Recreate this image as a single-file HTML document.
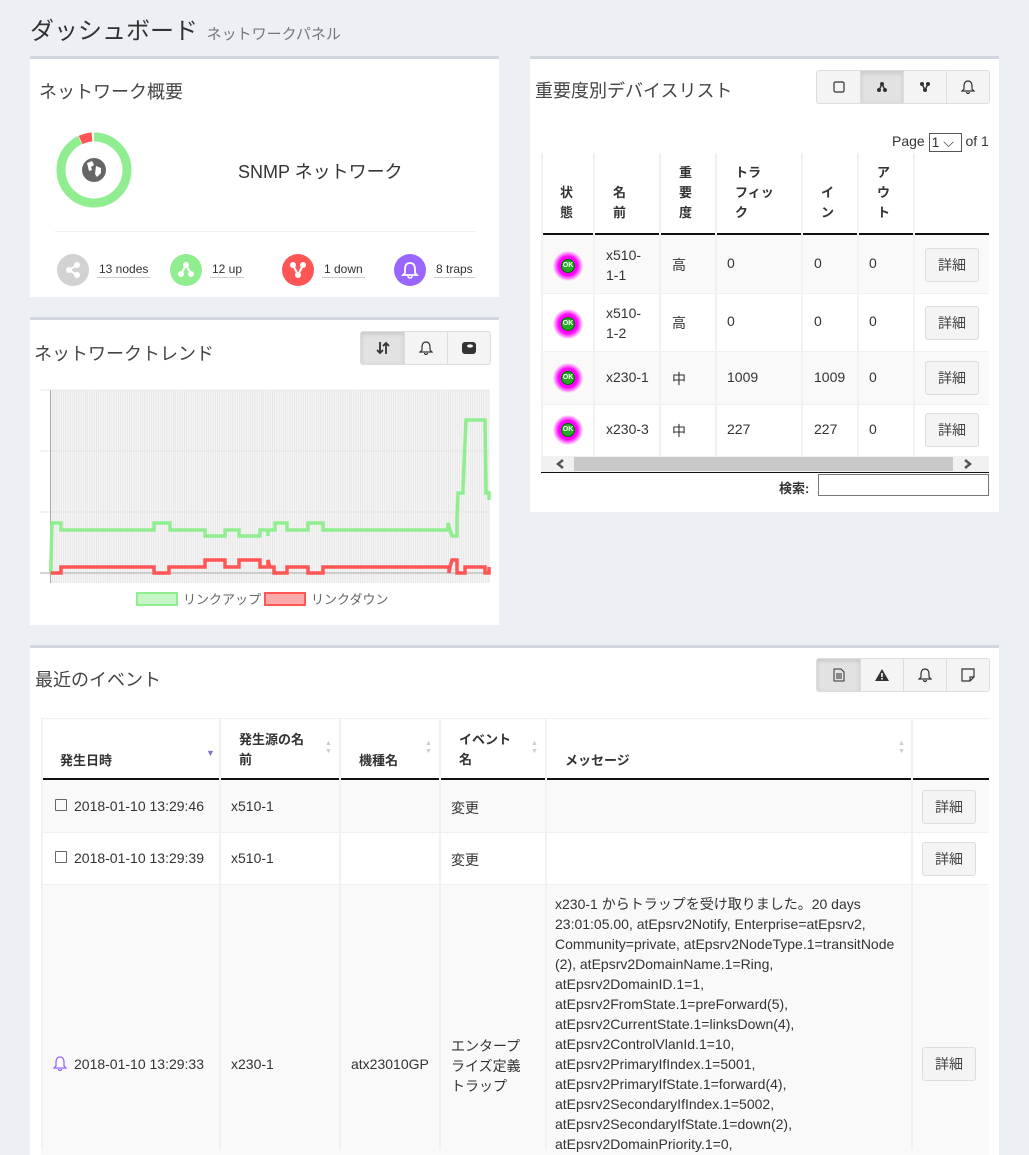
<!DOCTYPE html>
<html><head><meta charset="utf-8"><style>
*{box-sizing:border-box;margin:0;padding:0}
body{width:1029px;height:1150px;overflow:hidden;background:#ecf0f5;font-family:"Liberation Sans","Noto Sans CJK JP",sans-serif;color:#333;font-size:14px;position:relative}
.a{position:absolute}
.panel{position:absolute;background:#fff;border-top:3px solid #d2d6de}
.ttl{position:absolute;font-size:18px;color:#444;white-space:nowrap}
.bg{position:absolute;display:flex;border:1px solid #ddd;border-radius:3px;height:34px;overflow:hidden}
.bg div{width:43px;border-left:1px solid #ddd;background:#f4f4f4;display:flex;align-items:center;justify-content:center}
.bg div:first-child{border-left:none}
.bg div.on{background:#e2e2e2;box-shadow:inset 0 2px 4px rgba(0,0,0,.12)}
.btn{position:absolute;width:54px;height:34px;border:1px solid #ddd;border-radius:3px;background:#f4f4f4;display:flex;align-items:center;justify-content:center;font-size:14px;color:#444}
.c{position:absolute;border-right:2px solid #f1f1f1}
.ok{position:absolute;width:30px;height:30px;border-radius:50%;background:radial-gradient(circle,#f0f 0,#f0f 45%,rgba(255,0,255,0) 72%)}
.ok i{position:absolute;left:8px;top:8px;width:14px;height:14px;border-radius:50%;background:#2a2;border:1px solid #060;font-style:normal;font-size:7px;color:#fff;line-height:12px;text-align:center;font-weight:bold}
.hd{font-weight:bold;font-size:13px;color:#333}
.stat{position:absolute;display:flex;align-items:center}
.stat .ic{width:32px;height:32px;border-radius:50%;display:flex;align-items:center;justify-content:center}
.stat span{margin-left:8px;border-bottom:1px solid #ccc;font-size:12px;padding:0 2px 1px}
</style></head><body>
<div class="a" style="left:30px;top:11px;font-size:24px;color:#333">ダッシュボード <span style="font-size:15px;color:#777;margin-left:2px">ネットワークパネル</span></div>

<!-- Panel 1 -->
<div class="panel" style="left:30px;top:56px;width:469px;height:241px">
<div class="ttl" style="left:9px;top:19px">ネットワーク概要</div>
<svg class="a" style="left:26px;top:73px" width="76" height="76" viewBox="0 0 76 76">
<circle cx="38" cy="38" r="33" fill="none" stroke="#90ee90" stroke-width="9"/>
<path d="M38 5 A33 33 0 0 0 24 8.2" fill="none" stroke="#fff" stroke-width="10"/>
<path d="M36 5 A33 33 0 0 0 24.5 8" fill="none" stroke="#f55" stroke-width="9"/>
<circle cx="38" cy="38" r="12" fill="#666"/>
<path d="M31 31 l5 -2 2 4 -3 2 1 3 -3 1z M40 34 l5 2 0 5 -4 4 -2 -3z" fill="#fff"/>
</svg>
<div class="a" style="left:208px;top:99px;font-size:18px;color:#333">SNMP ネットワーク</div>
<div class="a" style="left:25px;top:172px;width:420px;border-top:1px solid #eee"></div>
<div class="stat" style="left:27px;top:195px"><div class="ic" style="background:#d2d2d2"><svg width="18" height="18"><circle cx="5" cy="9" r="3" fill="#fff"/><circle cx="13" cy="4" r="3" fill="#fff"/><circle cx="13" cy="14" r="3" fill="#fff"/><path d="M5 9L13 4M5 9L13 14" stroke="#fff" stroke-width="2"/></svg></div><span>13 nodes</span></div>
<div class="stat" style="left:140px;top:195px"><div class="ic" style="background:#90ee90"><svg width="18" height="18"><circle cx="9" cy="4" r="3" fill="#fff"/><circle cx="4" cy="13" r="3" fill="#fff"/><circle cx="14" cy="13" r="3" fill="#fff"/><path d="M9 4L4 13M9 4L14 13" stroke="#fff" stroke-width="2"/></svg></div><span>12 up</span></div>
<div class="stat" style="left:252px;top:195px"><div class="ic" style="background:#f55"><svg width="18" height="18"><circle cx="4" cy="4" r="3" fill="#fff"/><circle cx="14" cy="4" r="3" fill="#fff"/><circle cx="9" cy="14" r="3" fill="#fff"/><path d="M4 4L9 14M14 4L9 14" stroke="#fff" stroke-width="2"/></svg></div><span>1 down</span></div>
<div class="stat" style="left:364px;top:195px"><div class="ic" style="background:#9966ff"><svg width="18" height="18"><path d="M9 2c-4 0-5 3-5 6v4l-2 2h14l-2-2V8c0-3-1-6-5-6z" fill="none" stroke="#fff" stroke-width="1.8"/><path d="M7 15a2 2 0 0 0 4 0" stroke="#fff" fill="none" stroke-width="1.6"/></svg></div><span>8 traps</span></div>
</div>

<!-- Panel 2 -->
<div class="panel" style="left:30px;top:317px;width:469px;height:308px">
<div class="ttl" style="left:4px;top:20px">ネットワークトレンド</div>
<div class="bg" style="left:330px;top:11px"><div class="on"><svg width="14" height="14"><path d="M4 1v11M1 9l3 3 3-3M10 13V2M7 5l3-3 3 3" stroke="#333" stroke-width="1.8" fill="none"/></svg></div><div><svg width="14" height="14"><path d="M7 1c-3 0-4 2.5-4 5v3l-2 2h12l-2-2V6c0-2.5-1-5-4-5z M5.5 12a1.5 1.5 0 0 0 3 0" fill="none" stroke="#333" stroke-width="1.2"/></svg></div><div><svg width="16" height="16"><rect x="1" y="2" width="14" height="12" rx="3" fill="#333"/><ellipse cx="9" cy="6" rx="3" ry="1.6" fill="#fff"/></svg></div></div>
</div>
<svg class="a" style="left:30px;top:320px" width="469" height="300">
<defs><pattern id="p" width="2.2" height="10" patternUnits="userSpaceOnUse"><rect width="2.2" height="10" fill="#f6f6f6"/><rect width="1" height="10" fill="#e6e6e6"/></pattern></defs>
<rect x="21" y="70" width="439" height="193" fill="url(#p)"/>
<line x1="10" y1="70" x2="460" y2="70" stroke="#e8e8e8"/>
<line x1="10" y1="131" x2="460" y2="131" stroke="#e4e4e4"/>
<line x1="10" y1="192" x2="460" y2="192" stroke="#e4e4e4"/>
<line x1="10" y1="253" x2="460" y2="253" stroke="#aaa"/>
<line x1="20.5" y1="70" x2="20.5" y2="263" stroke="#aaa"/>
<polyline fill="none" stroke="#90ee90" stroke-width="3.5" points="20.7,253 22,203 31,203 31,210 124,210 124,203 140,203 140,210 175,210 175,216 195,216 195,210 209,210 209,216 230,216 230,210 238,210 238,216 238,210 245,210 245,203 257,203 257,210 278,210 278,203 293,203 293,210 418,210 418,203 420,210 422,216 427,216 427,198 428,173 433,173 433,168 436,100 455,100 456,173 459,173 459,180"/>
<polyline fill="none" stroke="#f55" stroke-width="3.5" points="20.7,253 31,253 31,247 124,247 124,253 139,253 139,247 175,247 175,240 195,240 195,247 209,247 209,240 230,240 230,247 238,247 238,240 240,247 244,247 244,253 257,253 257,247 278,247 278,253 293,253 293,247 419,247 419,253 420,247 422,240 427,240 427,253 435,253 435,247 455,247 455,253 459,253 459,247"/>
<rect x="107" y="273" width="40" height="12" fill="#c6f6c6" stroke="#90ee90" stroke-width="2"/>
<text x="153" y="284" font-size="13" fill="#666" font-family="Liberation Sans,Noto Sans CJK JP,sans-serif">リンクアップ</text>
<rect x="235" y="273" width="40" height="12" fill="#faa" stroke="#f55" stroke-width="2"/>
<text x="281" y="284" font-size="13" fill="#666" font-family="Liberation Sans,Noto Sans CJK JP,sans-serif">リンクダウン</text>
</svg>

<!-- Right panel -->
<div class="panel" style="left:530px;top:56px;width:469px;height:456px">
<div class="ttl" style="left:5px;top:18px">重要度別デバイスリスト</div>
<div class="bg" style="left:286px;top:11px"><div><svg width="12" height="12"><rect x="1" y="1" width="10" height="10" rx="1.5" fill="none" stroke="#333" stroke-width="1.2"/></svg></div><div class="on"><svg width="12" height="12"><circle cx="6" cy="3" r="2" fill="#333"/><circle cx="3" cy="9" r="2" fill="#333"/><circle cx="9" cy="9" r="2" fill="#333"/><path d="M6 3L3 9M6 3L9 9" stroke="#333" stroke-width="1.5"/></svg></div><div><svg width="12" height="12"><circle cx="3" cy="3" r="2" fill="#333"/><circle cx="9" cy="3" r="2" fill="#333"/><circle cx="6" cy="9" r="2" fill="#333"/><path d="M3 3L6 9M9 3L6 9" stroke="#333" stroke-width="1.5"/></svg></div><div><svg width="14" height="14"><path d="M7 1c-3 0-4 2.5-4 5v3l-2 2h12l-2-2V6c0-2.5-1-5-4-5z M5.5 12a1.5 1.5 0 0 0 3 0" fill="none" stroke="#333" stroke-width="1.2"/></svg></div></div>
<div class="a" style="left:362px;top:74px;font-size:14px">Page <span style="display:inline-block;border:1px solid #555;width:33px;height:19px;vertical-align:middle;font-size:14px;line-height:17px;padding-left:2px">1 ⌵</span> of 1</div>
</div>
<!-- right table -->
<div class="a" style="left:541px;top:153px;width:448px;height:303px;background:#fff">
<div class="a" style="left:0;top:82px;width:448px;height:59px;background:#f9f9f9"></div>
<div class="a" style="left:0;top:199px;width:448px;height:52px;background:#f9f9f9"></div>
<div class="a" style="left:0;top:80px;width:448px;border-top:2px solid #111"></div>
<div class="a" style="left:0;top:140px;width:448px;border-top:1px solid #f0f0f0"></div>
<div class="a" style="left:0;top:198px;width:448px;border-top:1px solid #f0f0f0"></div>
<div class="a" style="left:0;top:251px;width:448px;border-top:1px solid #f0f0f0"></div>
<div class="a" style="left:0;top:0;width:2px;height:303px;background:#f1f1f1"></div>
<div class="c" style="left:52px;top:0;height:303px"></div>
<div class="c" style="left:118px;top:0;height:303px"></div>
<div class="c" style="left:174px;top:0;height:303px"></div>
<div class="c" style="left:260px;top:0;height:303px"></div>
<div class="c" style="left:316px;top:0;height:303px"></div>
<div class="c" style="left:372px;top:0;height:303px"></div>
<div class="a hd" style="left:19px;top:30px;line-height:20px">状<br>態</div>
<div class="a hd" style="left:72px;top:30px;line-height:20px">名<br>前</div>
<div class="a hd" style="left:138px;top:10px;line-height:20px">重<br>要<br>度</div>
<div class="a hd" style="left:194px;top:10px;line-height:20px">トラ<br>フィッ<br>ク</div>
<div class="a hd" style="left:280px;top:30px;line-height:20px">イ<br>ン</div>
<div class="a hd" style="left:336px;top:10px;line-height:20px">ア<br>ウ<br>ト</div>

<div class="ok" style="left:12px;top:98px"><i>OK</i></div>
<div class="a" style="left:65px;top:92px;line-height:20px">x510-<br>1-1</div><div class="a" style="left:131px;top:102px">高</div><div class="a" style="left:186px;top:102px">0</div><div class="a" style="left:273px;top:102px">0</div><div class="a" style="left:328px;top:102px">0</div>
<div class="btn" style="left:384px;top:95px">詳細</div>
<div class="ok" style="left:12px;top:156px"><i>OK</i></div>
<div class="a" style="left:65px;top:150px;line-height:20px">x510-<br>1-2</div><div class="a" style="left:131px;top:160px">高</div><div class="a" style="left:186px;top:160px">0</div><div class="a" style="left:273px;top:160px">0</div><div class="a" style="left:328px;top:160px">0</div>
<div class="btn" style="left:384px;top:153px">詳細</div>
<div class="ok" style="left:12px;top:210px"><i>OK</i></div>
<div class="a" style="left:65px;top:216px">x230-1</div><div class="a" style="left:131px;top:216px">中</div><div class="a" style="left:186px;top:216px">1009</div><div class="a" style="left:273px;top:216px">1009</div><div class="a" style="left:328px;top:216px">0</div>
<div class="btn" style="left:384px;top:208px">詳細</div>
<div class="ok" style="left:12px;top:262px"><i>OK</i></div>
<div class="a" style="left:65px;top:268px">x230-3</div><div class="a" style="left:131px;top:268px">中</div><div class="a" style="left:186px;top:268px">227</div><div class="a" style="left:273px;top:268px">227</div><div class="a" style="left:328px;top:268px">0</div>
<div class="btn" style="left:384px;top:260px">詳細</div>
</div>
<div class="a" style="left:541px;top:456px;width:448px;height:16px;background:#f1f1f1"></div>
<div class="a" style="left:574px;top:457px;width:379px;height:14px;background:#c9c9c9"></div>
<svg class="a" style="left:555px;top:458px" width="12" height="12"><path d="M8 2L3 6l5 4" fill="none" stroke="#555" stroke-width="2.5"/></svg>
<svg class="a" style="left:961px;top:458px" width="12" height="12"><path d="M4 2l5 4-5 4" fill="none" stroke="#555" stroke-width="2.5"/></svg>
<div class="a" style="left:541px;top:472px;width:448px;border-top:1px solid #111"></div>
<div class="a" style="left:779px;top:478px;font-weight:bold;font-size:13px">検索:</div>
<div class="a" style="left:818px;top:474px;width:171px;height:22px;border:1px solid #777;background:#fff"></div>

<!-- Events -->
<div class="panel" style="left:30px;top:645px;width:969px;height:510px">
<div class="ttl" style="left:5px;top:18px">最近のイベント</div>
<div class="bg" style="left:786px;top:10px"><div class="on"><svg width="12" height="14"><path d="M1 1h7l3 3v9H1z M3 6h6M3 8h6M3 10h6" fill="none" stroke="#333" stroke-width="1"/></svg></div><div><svg width="16" height="14"><path d="M8 1L15 13H1z" fill="#333"/><rect x="7.2" y="5" width="1.6" height="4" fill="#fff"/><rect x="7.2" y="10" width="1.6" height="1.5" fill="#fff"/></svg></div><div><svg width="14" height="14"><path d="M7 1c-3 0-4 2.5-4 5v3l-2 2h12l-2-2V6c0-2.5-1-5-4-5z M5.5 12a1.5 1.5 0 0 0 3 0" fill="none" stroke="#333" stroke-width="1.2"/></svg></div><div><svg width="14" height="14"><path d="M1 1h12v8l-4 4H1z M9 13v-4h4" fill="none" stroke="#333" stroke-width="1.2"/></svg></div></div>
</div>
<div class="a" style="left:41px;top:718px;width:948px;height:432px;background:#fff">
<div class="a" style="left:0;top:62px;width:948px;height:52px;background:#f9f9f9"></div>
<div class="a" style="left:0;top:167px;width:948px;height:270px;background:#f9f9f9"></div>
<div class="a" style="left:0;top:0;width:948px;border-top:1px solid #f0f0f0"></div>
<div class="a" style="left:0;top:60px;width:948px;border-top:2px solid #111"></div>
<div class="a" style="left:0;top:114px;width:948px;border-top:1px solid #f0f0f0"></div>
<div class="a" style="left:0;top:166px;width:948px;border-top:1px solid #f0f0f0"></div>
<div class="c" style="left:0;top:0;height:432px;width:1px"></div>
<div class="c" style="left:178px;top:0;height:432px"></div>
<div class="c" style="left:298px;top:0;height:432px"></div>
<div class="c" style="left:398px;top:0;height:432px"></div>
<div class="c" style="left:504px;top:0;height:432px"></div>
<div class="c" style="left:870px;top:0;height:432px"></div>
<div class="a hd" style="left:19px;top:32px">発生日時</div>
<div class="a" style="left:165px;top:30px;color:#77c;font-size:9px">▼</div>
<div class="a hd" style="left:198px;top:12px;line-height:20px;width:80px">発生源の名<br>前</div>
<div class="a" style="left:284px;top:22px;color:#ccc;font-size:7px;line-height:8px">▲<br>▼</div>
<div class="a hd" style="left:318px;top:32px">機種名</div>
<div class="a" style="left:384px;top:22px;color:#ccc;font-size:7px;line-height:8px">▲<br>▼</div>
<div class="a hd" style="left:418px;top:12px;line-height:20px">イベント<br>名</div>
<div class="a" style="left:490px;top:22px;color:#ccc;font-size:7px;line-height:8px">▲<br>▼</div>
<div class="a hd" style="left:524px;top:32px">メッセージ</div>
<div class="a" style="left:857px;top:22px;color:#ccc;font-size:7px;line-height:8px">▲<br>▼</div>

<div class="a" style="left:14px;top:81px;width:12px;height:12px;border:1px solid #666;border-radius:1px"></div>
<div class="a" style="left:33px;top:80px">2018-01-10 13:29:46</div><div class="a" style="left:190px;top:80px">x510-1</div><div class="a" style="left:410px;top:80px">変更</div>
<div class="btn" style="left:881px;top:72px">詳細</div>
<div class="a" style="left:14px;top:133px;width:12px;height:12px;border:1px solid #666;border-radius:1px"></div>
<div class="a" style="left:33px;top:132px">2018-01-10 13:29:39</div><div class="a" style="left:190px;top:132px">x510-1</div><div class="a" style="left:410px;top:132px">変更</div>
<div class="btn" style="left:881px;top:124px">詳細</div>

<svg class="a" style="left:12px;top:338px" width="14" height="16"><path d="M7 1c-3 0-4 2.5-4 5v4l-2 2h12l-2-2V6c0-2.5-1-5-4-5z M5.5 13a1.5 1.5 0 0 0 3 0" fill="none" stroke="#96f" stroke-width="1.3"/></svg>
<div class="a" style="left:33px;top:338px">2018-01-10 13:29:33</div><div class="a" style="left:190px;top:338px">x230-1</div><div class="a" style="left:310px;top:338px">atx23010GP</div>
<div class="a" style="left:410px;top:318px;line-height:20px;width:80px">エンタープ<br>ライズ定義<br>トラップ</div>
<div class="a" style="left:514px;top:176px;line-height:20px;width:350px;font-size:14px">x230-1 からトラップを受け取りました。20 days<br>23:01:05.00, atEpsrv2Notify, Enterprise=atEpsrv2,<br>Community=private, atEpsrv2NodeType.1=transitNode<br>(2), atEpsrv2DomainName.1=Ring,<br>atEpsrv2DomainID.1=1,<br>atEpsrv2FromState.1=preForward(5),<br>atEpsrv2CurrentState.1=linksDown(4),<br>atEpsrv2ControlVlanId.1=10,<br>atEpsrv2PrimaryIfIndex.1=5001,<br>atEpsrv2PrimaryIfState.1=forward(4),<br>atEpsrv2SecondaryIfIndex.1=5002,<br>atEpsrv2SecondaryIfState.1=down(2),<br>atEpsrv2DomainPriority.1=0,</div>
<div class="btn" style="left:881px;top:329px">詳細</div>
</div>
</body></html>
